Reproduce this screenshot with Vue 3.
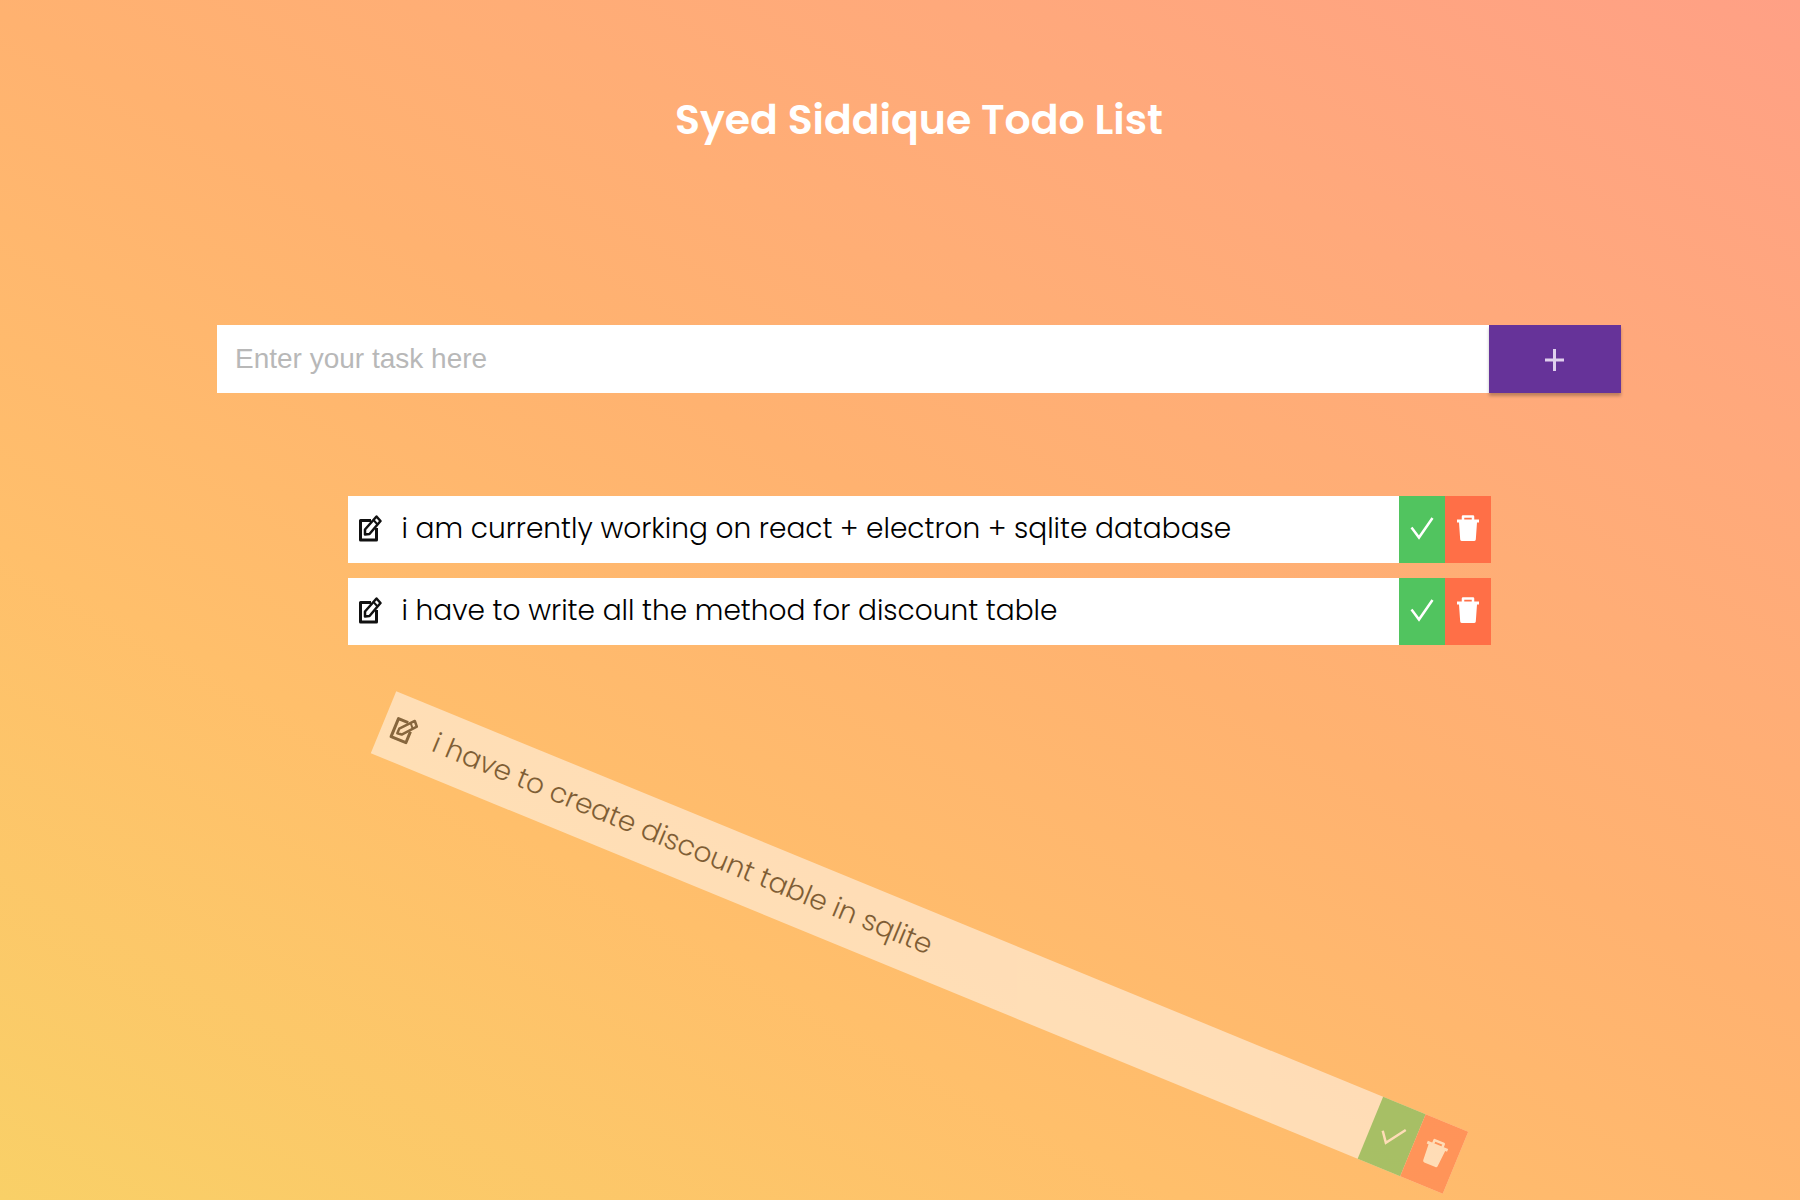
<script setup>
import { ref } from 'vue'

const draft = ref('')
const todos = ref([
  { id: 1, text: 'i am currently working on react + electron + sqlite database', falling: false },
  { id: 2, text: 'i have to write all the method for discount table', falling: false },
  { id: 3, text: 'i have to create discount table in sqlite', falling: true }
])

function addTodo() {
  const text = draft.value.trim()
  if (!text) return
  todos.value.push({ id: Date.now(), text, falling: false })
  draft.value = ''
}

function removeTodo(id) {
  todos.value = todos.value.filter((todo) => todo.id !== id)
}
</script>

<template>
  <main class="page">
    <h1 class="title">Syed Siddique Todo List</h1>

    <form class="entry" @submit.prevent="addTodo">
      <input v-model="draft" class="entry-input" type="text" placeholder="Enter your task here" aria-label="New task" />
      <button class="entry-add" type="submit" aria-label="Add task">
        <svg width="20" height="24" viewBox="0 0 20 24" aria-hidden="true">
          <path d="M9.500 2v22M0 13h19" fill="none" stroke="currentColor" stroke-width="3" />
        </svg>
      </button>
    </form>

    <ul class="todos">
      <li v-for="todo in todos" :key="todo.id" class="todo" :class="{ fall: todo.falling }">
        <button class="edit" type="button" aria-label="Edit task">
          <svg width="24" height="28" viewBox="0 0 24 28" aria-hidden="true">
            <g fill="none" stroke="currentColor" stroke-linejoin="round">
              <path d="M13 6.500H2.500v19.500h16V14" stroke-width="3" />
              <path d="M7 20.500v-5L18.500 2.500l4 4.500L11.500 20z" stroke-width="2.500" />
              <path d="M15.500 6l4 4.500" stroke-width="2" />
            </g>
          </svg>
        </button>
        <span class="text">{{ todo.text }}</span>
        <button class="action done" type="button" aria-label="Complete task">
          <svg width="24" height="24" viewBox="0 0 24 24" aria-hidden="true">
            <path d="M1.500 11.500L9 21.500L22.500 2" fill="none" stroke="currentColor" stroke-width="2.500" />
          </svg>
        </button>
        <button class="action remove" type="button" aria-label="Delete task" @click="removeTodo(todo.id)">
          <svg width="24" height="28" viewBox="0 0 24 28" aria-hidden="true">
            <path d="M7 6V2.500h10V6" fill="none" stroke="currentColor" stroke-width="2.500" stroke-linejoin="round" />
            <path d="M1 5.500h22v3h-2l-1.200 17q-.2 1.500-1.800 1.500H6q-1.600 0-1.800-1.500L3 8.500H1z" fill="currentColor" />
          </svg>
        </button>
      </li>
    </ul>
  </main>
</template>

<style>
body {
  margin: 0;
}
</style>

<style scoped>
.page {
  box-sizing: border-box;
  display: flex;
  flex-direction: column;
  align-items: center;
  min-height: 100vh;
  padding: 90px 0 0 38px;
  overflow: hidden;
  background: linear-gradient(29deg, #f9d067 0%, #ffbf6b 30%, #ffb270 54%, #ffa97b 78%, #ffa085 100%);
  font-family: Poppins, Lato, "Open Sans", sans-serif;
  color: #000;
}

.title {
  margin: 0;
  font-size: 41px;
  line-height: 60px;
  font-weight: 600;
  color: #fff;
}

.entry {
  display: flex;
  width: 78vw;
  height: 68px;
  margin-top: 175px;
}

.entry-input {
  flex: 1;
  min-width: 0;
  padding: 0 18px;
  border: 0;
  outline: 0;
  background: #fff;
  font-family: "Liberation Sans", Arial, sans-serif;
  font-size: 28px;
}

.entry-input::placeholder {
  color: #b8b8b8;
  opacity: 1;
}

button {
  display: flex;
  align-items: center;
  justify-content: center;
  padding: 0;
  border: 0;
  cursor: pointer;
}

.entry-add {
  width: 132px;
  background: #663399;
  color: #e0d0ee;
  box-shadow: 0 3px 3px rgba(0, 0, 0, 0.25);
}

.todos {
  display: flex;
  flex-direction: column;
  gap: 15px;
  width: 63.5vw;
  margin: 103px 0 0;
  padding: 0;
  list-style: none;
}

.todo {
  display: flex;
  height: 67px;
  background: #fff;
}

.edit,
.action {
  padding-bottom: 3px;
}

.edit {
  width: 44px;
  background: transparent;
  color: #111;
}

.text {
  flex: 1;
  padding-left: 10px;
  font-size: 28px;
  font-weight: 300;
  line-height: 66px;
  white-space: nowrap;
}

.action {
  width: 46px;
  color: #fff;
}

.done {
  background: #51c45f;
}

.remove {
  background: #ff6f47;
}

.fall {
  margin: 0 -8px;
  opacity: 0.5;
  transform: translateY(249px) rotate(0.39rad);
}
</style>
